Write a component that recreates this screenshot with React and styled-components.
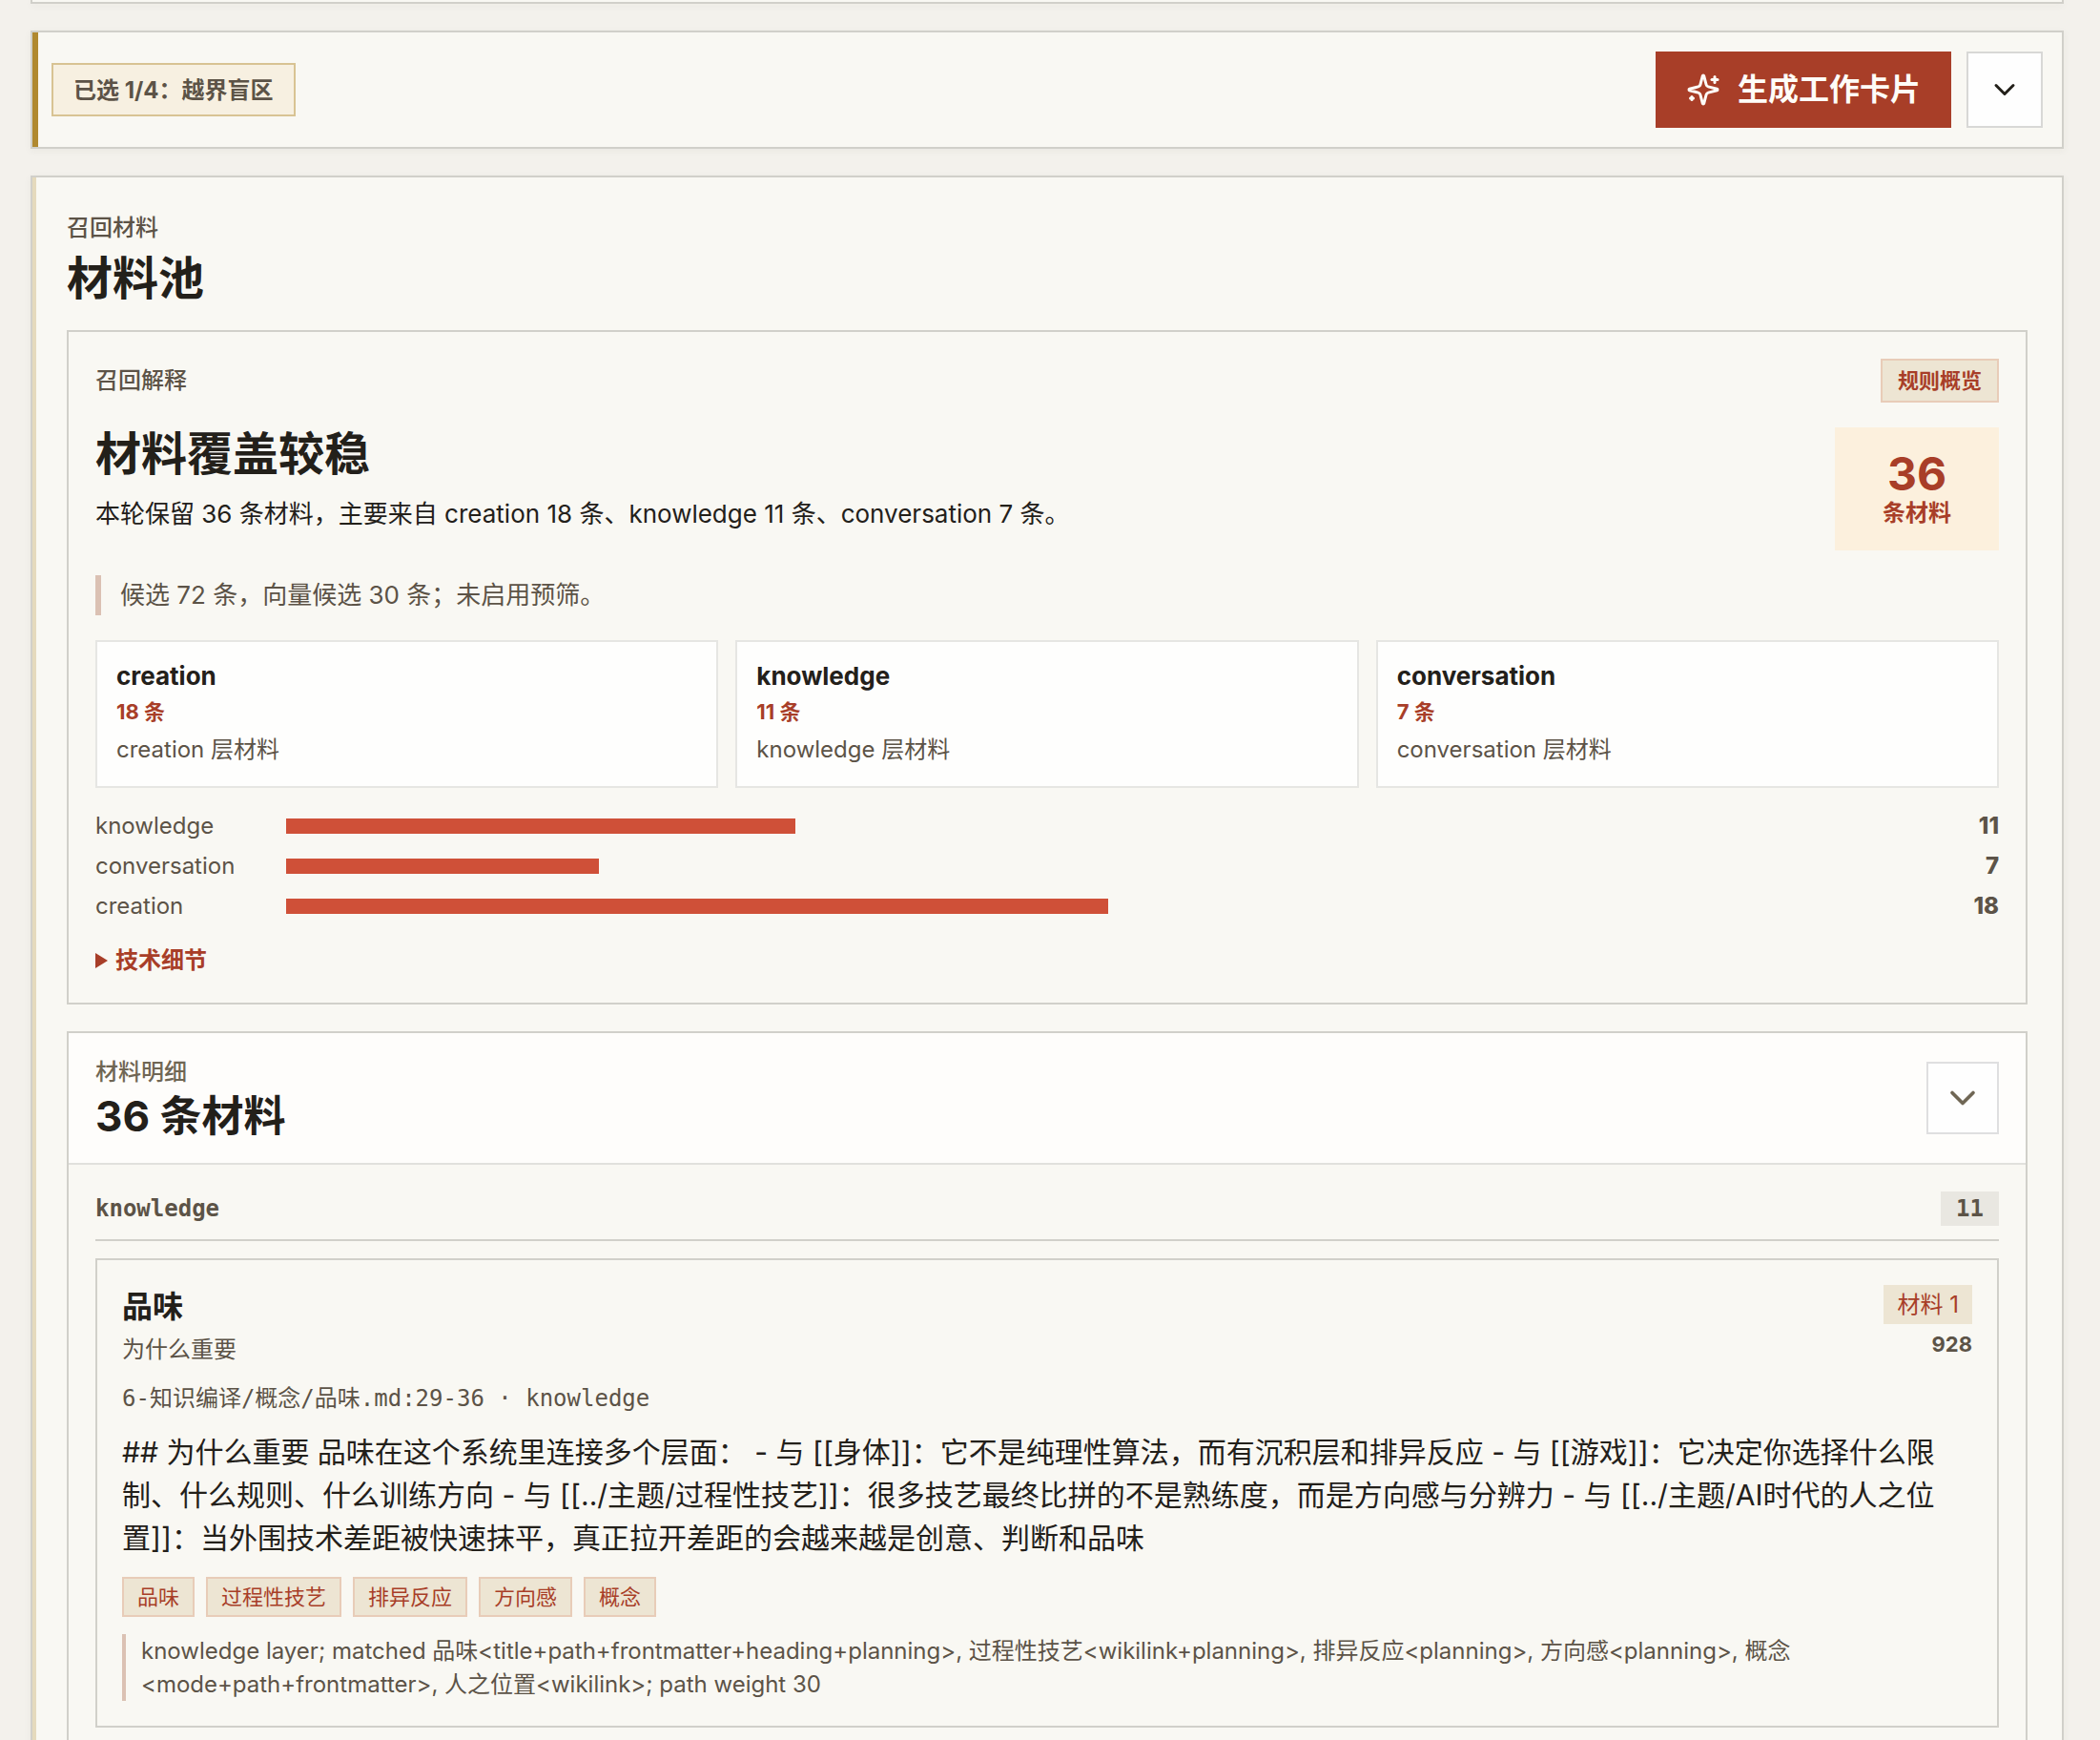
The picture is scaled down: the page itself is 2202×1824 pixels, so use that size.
import React, { useState } from 'react';
import styled, { createGlobalStyle } from 'styled-components';
import { ChevronDown } from 'lucide-react';

const sans = `Inter, "Noto Sans CJK SC", sans-serif`;
const mono = `"DejaVu Sans Mono", "Noto Sans CJK SC", monospace`;

const ink = '#23201a';
const muted = '#5c5347';
const red = '#a83e28';
const line = '#d1d0ca';
const paper = '#f9f8f3';
const sand = '#ede5d3';

const GlobalStyle = createGlobalStyle`
    * {
        box-sizing: border-box;
    }

    body {
        margin: 0;
        background: #f3f1ec;
        color: ${ink};
        font-family: ${sans};
        font-size: 26px;
    }

    h2, h3, h4, p, ul {
        margin: 0;
        padding: 0;
    }

    button {
        font-family: inherit;
        cursor: pointer;
    }
`

const Page = styled.main`
    display: flex;
    flex-direction: column;
    gap: 28px;
    height: 100vh;
    padding: 0 38px 0 32px;
    overflow-y: auto;
    scrollbar-width: none;
`

const Panel = styled.section`
    flex: none;
    background: ${paper};
    border: 2px solid ${line};
    box-shadow: 0 2px 8px rgba(60, 50, 30, 0.05);
`

// bottom edge of the panel scrolled away above
const PanelTail = styled(Panel)`
    height: 4px;
    border-top: none;
`

const Toolbar = styled(Panel)`
    display: flex;
    align-items: center;
    justify-content: space-between;
    padding: 20px;
    box-shadow: inset 6px 0 0 #b08930, 0 2px 8px rgba(60, 50, 30, 0.05);
`

const SelectedPill = styled.span`
    padding: 11px 21px 9px;
    border: 2px solid #d8c393;
    background: #f7f0e1;
    color: ${muted};
    font-size: 24px;
    line-height: 32px;
    font-weight: 700;
`

const Actions = styled.div`
    display: flex;
    gap: 16px;
`

const PrimaryButton = styled.button`
    display: flex;
    align-items: center;
    gap: 18px;
    height: 80px;
    padding: 0 32px;
    border: none;
    background: ${red};
    color: #fefcf8;
    font-size: 32px;
    line-height: 48px;
    font-weight: 700;
`

const IconButton = styled.button`
    display: flex;
    align-items: center;
    justify-content: center;
    width: ${(props) => props.$size}px;
    height: ${(props) => props.$size}px;
    padding: 0;
    border: 2px solid ${(props) => props.$border};
    background: #fefefe;
    color: ${(props) => props.$color};
`

const PoolPanel = styled(Panel)`
    padding: 36px;
    box-shadow: inset 4px 0 0 #e5dabd, 0 2px 8px rgba(60, 50, 30, 0.05);
`

const PoolHeader = styled.header`
    display: flex;
    flex-direction: column;
    gap: 6px;
    margin-bottom: 24px;
`

const Eyebrow = styled.p`
    color: ${(props) => props.$color || muted};
    font-size: 24px;
    line-height: 34px;
    font-weight: 500;
`

const Title = styled.h2`
    font-size: 48px;
    line-height: 60px;
    font-weight: 700;
`

const Explain = styled.section`
    display: flex;
    flex-direction: column;
    gap: 26px;
    padding: 28px;
    border: 2px solid ${line};
`

const Spread = styled.div`
    display: flex;
    align-items: ${(props) => props.$align || 'center'};
    justify-content: space-between;
`

const Tag = styled.span`
    padding: ${(props) => (props.$bold ? '5px 16px' : '3px 14px')};
    border: 2px solid #e8ccb8;
    background: ${sand};
    color: ${red};
    font-size: 22px;
    line-height: 32px;
    font-weight: ${(props) => (props.$bold ? 600 : 400)};
`

const Verdict = styled.h3`
    font-size: 48px;
    line-height: 56px;
    font-weight: 700;
`

const Summary = styled.p`
    margin-top: 14px;
    line-height: 42px;
`

const Stat = styled.div`
    width: 172px;
    padding: 24px 0;
    background: #fcf0dd;
    color: ${red};
    text-align: center;
    font-weight: 700;
`

const StatNumber = styled.strong`
    display: block;
    font-size: 48px;
    line-height: 50px;
    font-weight: 700;
`

const StatLabel = styled.span`
    display: block;
    font-size: 24px;
    line-height: 31px;
`

const Note = styled.p`
    padding-left: 20px;
    border-left: 6px solid #dbc1b3;
    color: ${muted};
    line-height: 42px;
`

const LayerGrid = styled.div`
    display: grid;
    grid-template-columns: repeat(3, 1fr);
    gap: 18px;
`

const LayerCard = styled.article`
    display: flex;
    flex-direction: column;
    gap: 6px;
    padding: 20px;
    border: 2px solid #e6e6e3;
    background: #fefefd;
`

const LayerName = styled.h4`
    font-size: 26px;
    line-height: 31px;
    font-weight: 700;
`

const LayerCount = styled.span`
    color: ${red};
    font-size: 22px;
    line-height: 32px;
    font-weight: 700;
`

const LayerText = styled.p`
    color: ${muted};
    font-size: 24px;
    line-height: 36px;
`

const Bars = styled.div`
    display: flex;
    flex-direction: column;
    gap: 14px;
`

const BarRow = styled.div`
    display: grid;
    grid-template-columns: 180px 1fr 52px;
    align-items: center;
    gap: 20px;
    color: ${muted};
    font-size: 24px;
    line-height: 28px;
`

const Bar = styled.div`
    height: 16px;
    background: #cf5038;
`

const BarValue = styled.strong`
    text-align: right;
    font-weight: 800;
`

const Details = styled.details`
    color: ${red};
    font-size: 24px;
    line-height: 33px;
    font-weight: 600;

    summary {
        display: flex;
        align-items: center;
        gap: 8px;
        list-style: none;
        cursor: pointer;
    }

    &[open] svg {
        transform: rotate(90deg);
    }
`

const List = styled.section`
    margin-top: 28px;
    border: 2px solid ${line};
`

const ListHeader = styled.header`
    display: flex;
    align-items: center;
    justify-content: space-between;
    padding: 24px 28px;
    border-bottom: 2px solid #e1e1dd;
    background: #fefdfb;
`

const ListTitle = styled.h3`
    margin-top: 4px;
    font-size: 44px;
    line-height: 50px;
    font-weight: 700;
`

const ListBody = styled.div`
    padding: 28px;
`

const GroupHeader = styled.div`
    display: flex;
    align-items: center;
    justify-content: space-between;
    margin-bottom: 18px;
    padding-bottom: 14px;
    border-bottom: 2px solid ${line};
    color: ${muted};
    font-family: ${mono};
    font-size: 24px;
    line-height: 36px;
    font-weight: 700;
`

const GroupCount = styled.span`
    padding: 0 16px;
    background: #e9e7e1;
`

const Material = styled.article`
    display: flex;
    flex-direction: column;
    gap: 18px;
    padding: 26px;
    border: 2px solid ${line};
`

const MaterialTitle = styled.h4`
    font-size: 32px;
    line-height: 46px;
    font-weight: 700;
`

const MaterialHeading = styled.p`
    margin-top: 4px;
    color: ${muted};
    font-size: 24px;
    line-height: 35px;
`

const Rank = styled.div`
    display: flex;
    flex-direction: column;
    align-items: flex-end;
    gap: 8px;
`

const RankTag = styled.span`
    padding: 6px 14px;
    background: ${sand};
    color: ${red};
    font-size: 24px;
    line-height: 29px;
`

const Score = styled.strong`
    color: ${muted};
    font-size: 22px;
    line-height: 27px;
    font-weight: 700;
`

const Path = styled.p`
    color: ${muted};
    font-family: ${mono};
    font-size: 24px;
    line-height: 32px;
`

const Excerpt = styled.p`
    font-size: 30px;
    line-height: 45px;
`

const TagList = styled.ul`
    display: flex;
    flex-wrap: wrap;
    gap: 12px;
    list-style: none;
`

const Reason = styled.p`
    padding-left: 16px;
    border-left: 4px solid #dbc1b3;
    color: ${muted};
    font-size: 24px;
    line-height: 35px;
`

const layers = [
    { name: 'creation', count: 18 },
    { name: 'knowledge', count: 11 },
    { name: 'conversation', count: 7 },
];

const bars = [
    { name: 'knowledge', count: 11 },
    { name: 'conversation', count: 7 },
    { name: 'creation', count: 18 },
];

const total = 36;

const tags = ['品味', '过程性技艺', '排异反应', '方向感', '概念'];

function SparklesIcon(){
    return (
        <svg width="36" height="36" viewBox="0 0 24 24" fill="none" stroke="currentColor"
            strokeWidth="2" strokeLinecap="round" strokeLinejoin="round" aria-hidden="true">
            <path d="M9.937 15.5A2 2 0 0 0 8.5 14.063l-6.135-1.582a.5.5 0 0 1 0-.962L8.5 9.936A2 2 0 0 0 9.937 8.5l1.582-6.135a.5.5 0 0 1 .963 0L14.063 8.5A2 2 0 0 0 15.5 9.937l6.135 1.581a.5.5 0 0 1 0 .964L15.5 14.063a2 2 0 0 0-1.437 1.437l-1.582 6.135a.5.5 0 0 1-.963 0z" />
            <path d="M20 3v4" />
            <path d="M22 5h-4" />
            <path d="M4 17v2" />
            <path d="M5 18H3" />
        </svg>
    )
}

function RecallExplain(){
    return (
        <Explain>
            <Spread>
                <Eyebrow>召回解释</Eyebrow>
                <Tag $bold>规则概览</Tag>
            </Spread>
            <Spread $align="flex-start">
                <div>
                    <Verdict>材料覆盖较稳</Verdict>
                    <Summary>本轮保留 36 条材料，主要来自 creation 18 条、knowledge 11 条、conversation 7 条。</Summary>
                </div>
                <Stat>
                    <StatNumber>{total}</StatNumber>
                    <StatLabel>条材料</StatLabel>
                </Stat>
            </Spread>
            <Note>候选 72 条，向量候选 30 条；未启用预筛。</Note>
            <LayerGrid>
                {layers.map((layer) => (
                    <LayerCard key={layer.name}>
                        <LayerName>{layer.name}</LayerName>
                        <LayerCount>{layer.count} 条</LayerCount>
                        <LayerText>{layer.name} 层材料</LayerText>
                    </LayerCard>
                ))}
            </LayerGrid>
            <Bars>
                {bars.map((bar) => (
                    <BarRow key={bar.name}>
                        <span>{bar.name}</span>
                        <Bar style={{ width: `${Math.round((bar.count / total) * 100)}%` }} />
                        <BarValue>{bar.count}</BarValue>
                    </BarRow>
                ))}
            </Bars>
            <Details>
                <summary>
                    <svg width="13" height="16" viewBox="0 0 13 16" fill="currentColor" aria-hidden="true">
                        <path d="M0 0L13 8L0 16z" />
                    </svg>
                    技术细节
                </summary>
            </Details>
        </Explain>
    )
}

function MaterialList(){
    const [open, setOpen] = useState(true);

    return (
        <List>
            <ListHeader>
                <div>
                    <Eyebrow $color="#6f6654">材料明细</Eyebrow>
                    <ListTitle>{total} 条材料</ListTitle>
                </div>
                <IconButton $size={76} $border="#dfdfe0" $color="#6f6654"
                    aria-label="展开材料" aria-expanded={open} onClick={() => setOpen(!open)}>
                    <ChevronDown size={44} strokeWidth={2} />
                </IconButton>
            </ListHeader>
            {open &&
            <ListBody>
                <GroupHeader>
                    <span>knowledge</span>
                    <GroupCount>11</GroupCount>
                </GroupHeader>
                <Material>
                    <Spread $align="flex-start">
                        <div>
                            <MaterialTitle>品味</MaterialTitle>
                            <MaterialHeading>为什么重要</MaterialHeading>
                        </div>
                        <Rank>
                            <RankTag>材料 1</RankTag>
                            <Score>928</Score>
                        </Rank>
                    </Spread>
                    <Path>6-知识编译/概念/品味.md:29-36 · knowledge</Path>
                    <Excerpt>
                        ## 为什么重要 品味在这个系统里连接多个层面： - 与 [[身体]]：它不是纯理性算法，而有沉积层和排异反应 - 与 [[游戏]]：它决定你选择什么限制、什么规则、什么训练方向 - 与 [[../主题/过程性技艺]]：很多技艺最终比拼的不是熟练度，而是方向感与分辨力 - 与 [[../主题/AI时代的人之位置]]：当外围技术差距被快速抹平，真正拉开差距的会越来越是创意、判断和品味
                    </Excerpt>
                    <TagList>
                        {tags.map((tag) => <Tag as="li" key={tag}>{tag}</Tag>)}
                    </TagList>
                    <Reason>
                        {'knowledge layer; matched 品味<title+path+frontmatter+heading+planning>, 过程性技艺<wikilink+planning>, 排异反应<planning>, 方向感<planning>, 概念<mode+path+frontmatter>, 人之位置<wikilink>; path weight 30'}
                    </Reason>
                </Material>
            </ListBody>}
        </List>
    )
}

function App(){
    return (
        <Page lang="zh-CN">
            <GlobalStyle />
            <PanelTail />
            <Toolbar>
                <SelectedPill>已选 1/4：越界盲区</SelectedPill>
                <Actions>
                    <PrimaryButton>
                        <SparklesIcon />
                        生成工作卡片
                    </PrimaryButton>
                    <IconButton $size={80} $border="#d8d8d6" $color={ink} aria-label="更多操作">
                        <ChevronDown size={36} strokeWidth={2} />
                    </IconButton>
                </Actions>
            </Toolbar>
            <PoolPanel>
                <PoolHeader>
                    <Eyebrow>召回材料</Eyebrow>
                    <Title>材料池</Title>
                </PoolHeader>
                <RecallExplain />
                <MaterialList />
            </PoolPanel>
        </Page>
    )
}

export default App;
